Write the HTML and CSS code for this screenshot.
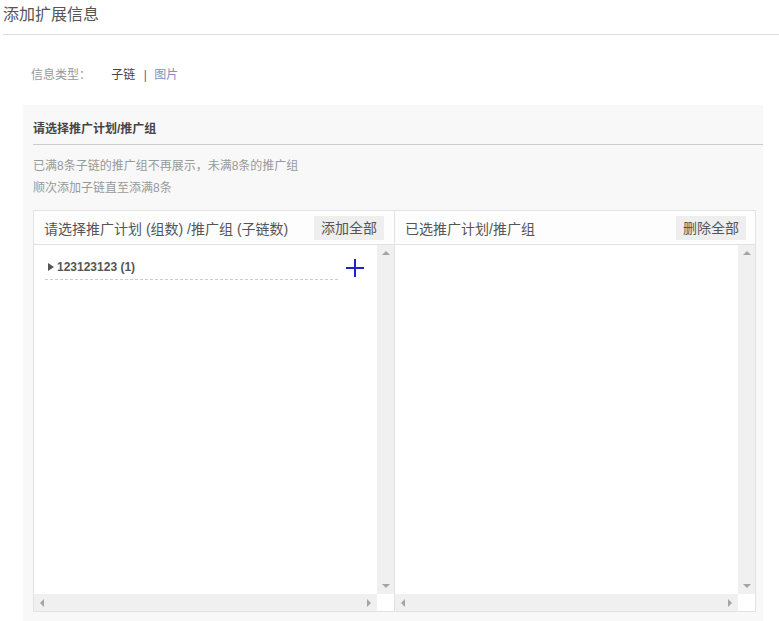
FILE: index.html
```html
<!DOCTYPE html>
<html>
<head>
    <meta charset="utf-8">
    <title>添加扩展信息</title>
    <link rel="stylesheet" href="styles.css">
</head>
<body>
    <h1 class="page-title">添加扩展信息</h1>

    <div class="type-row">
        <span class="type-label">信息类型：</span>
        <a class="type-item current">子链</a>
        <span class="type-sep">|</span>
        <a class="type-item">图片</a>
    </div>

    <div class="panel">
        <h2 class="panel-title">请选择推广计划/推广组</h2>
        <div class="panel-tips">
            <p>已满8条子链的推广组不再展示，未满8条的推广组</p>
            <p>顺次添加子链直至添满8条</p>
        </div>

        <div class="picker">
            <!-- 待选列表 -->
            <div class="box box-left">
                <div class="box-head">
                    <span class="box-title">请选择推广计划 (组数) /推广组 (子链数)</span>
                    <a class="box-btn">添加全部</a>
                </div>
                <div class="box-body">
                    <div class="list">
                        <div class="list-row">
                            <div class="list-item">
                                <span class="caret"></span>
                                <span class="item-name">123123123 (1)</span>
                            </div>
                            <svg class="add-icon" width="20" height="20" viewBox="0 0 20 20">
                                <path d="M10 1V19M1 10H19" stroke="#2020d0" stroke-width="2" fill="none"/>
                            </svg>
                        </div>
                    </div>
                    <div class="vbar"><span class="arr arr-up"></span><span class="arr arr-down"></span></div>
                    <div class="hbar"><span class="arr arr-left"></span><span class="arr arr-right"></span></div>
                    <div class="corner"></div>
                </div>
            </div>

            <!-- 已选列表 -->
            <div class="box box-right">
                <div class="box-head">
                    <span class="box-title">已选推广计划/推广组</span>
                    <a class="box-btn">删除全部</a>
                </div>
                <div class="box-body">
                    <div class="list"></div>
                    <div class="vbar"><span class="arr arr-up"></span><span class="arr arr-down"></span></div>
                    <div class="hbar"><span class="arr arr-left"></span><span class="arr arr-right"></span></div>
                    <div class="corner"></div>
                </div>
            </div>
        </div>
    </div>
</body>
</html>
```

FILE: styles.css
```css
body {
    margin: 0;
    font-family: "Liberation Sans", "Noto Sans CJK SC", sans-serif;
    font-size: 12px;
    color: #333;
    background: #fff;
}
.page-title {
    margin: 0 0 0 3px;
    height: 34px;
    line-height: 30px;
    font-size: 16px;
    font-weight: normal;
    color: #555;
    border-bottom: 1px solid #ddd;
}
.type-row {
    margin: 30px 0 0 31px;
    line-height: 20px;
    height: 20px;
}
.type-label {
    color: #999;
    margin-right: 17px;
}
.type-item {
    color: #7b93bd;
}
.type-item.current {
    color: #444;
}
.type-sep {
    color: #666;
    margin: 0 4px 0 5px;
}
.panel {
    margin: 20px 0 0 23px;
    width: 740px;
    background: #f8f8f8;
    padding: 0 0 10px 10px;
    box-sizing: border-box;
}
.panel-title {
    margin: 0;
    padding: 14px 0 5px;
    line-height: 20px;
    font-size: 12px;
    font-weight: bold;
    color: #444;
    border-bottom: 1px solid #ccc;
}
.panel-tips {
    margin-top: 10px;
    color: #999;
}
.panel-tips p {
    margin: 0;
    line-height: 22px;
}
.picker {
    display: flex;
    margin-top: 11px;
}
.box {
    width: 362px;
    box-sizing: border-box;
    border: 1px solid #e2e2e2;
    background: #fff;
}
.box-right {
    width: 361px;
    border-left: none;
}
.box-head {
    display: flex;
    align-items: center;
    justify-content: space-between;
    height: 33px;
    padding: 0 10px;
    border-bottom: 1px solid #e2e2e2;
    background: #fdfdfd;
}
.box-right .box-head {
    padding-right: 9px;
}
.box-title {
    font-size: 14px;
    color: #555;
}
.box-btn {
    display: inline-block;
    height: 24px;
    line-height: 24px;
    padding: 0 7px;
    font-size: 14px;
    color: #555;
    background: #eee;
}
.box-body {
    display: grid;
    grid-template-columns: 1fr 17px;
    grid-template-rows: 1fr 17px;
    height: 366px;
}
.list {
    padding: 10px 0 0 11px;
}
.list-row {
    display: flex;
    align-items: center;
}
.list-item {
    display: flex;
    align-items: center;
    width: 293px;
    height: 24px;
    border-bottom: 1px dashed #ccc;
}
.caret {
    width: 0;
    height: 0;
    margin: 0 3px 0 3px;
    border-top: 4px solid transparent;
    border-bottom: 4px solid transparent;
    border-left: 6px solid #555;
}
.item-name {
    font-weight: bold;
    color: #555;
}
.add-icon {
    margin-left: 7px;
}
.vbar {
    display: flex;
    flex-direction: column;
    justify-content: space-between;
    align-items: center;
    padding: 6px 0;
    background: #f0f0f0;
}
.hbar {
    display: flex;
    justify-content: space-between;
    align-items: center;
    padding: 0 6px;
    background: #f0f0f0;
}
.corner {
    background: #fff;
}
.arr {
    width: 0;
    height: 0;
}
.arr-up {
    border-left: 4px solid transparent;
    border-right: 4px solid transparent;
    border-bottom: 4px solid #a5a5a5;
}
.arr-down {
    border-left: 4px solid transparent;
    border-right: 4px solid transparent;
    border-top: 4px solid #a5a5a5;
}
.arr-left {
    border-top: 4px solid transparent;
    border-bottom: 4px solid transparent;
    border-right: 4px solid #a5a5a5;
}
.arr-right {
    border-top: 4px solid transparent;
    border-bottom: 4px solid transparent;
    border-left: 4px solid #a5a5a5;
}
```
